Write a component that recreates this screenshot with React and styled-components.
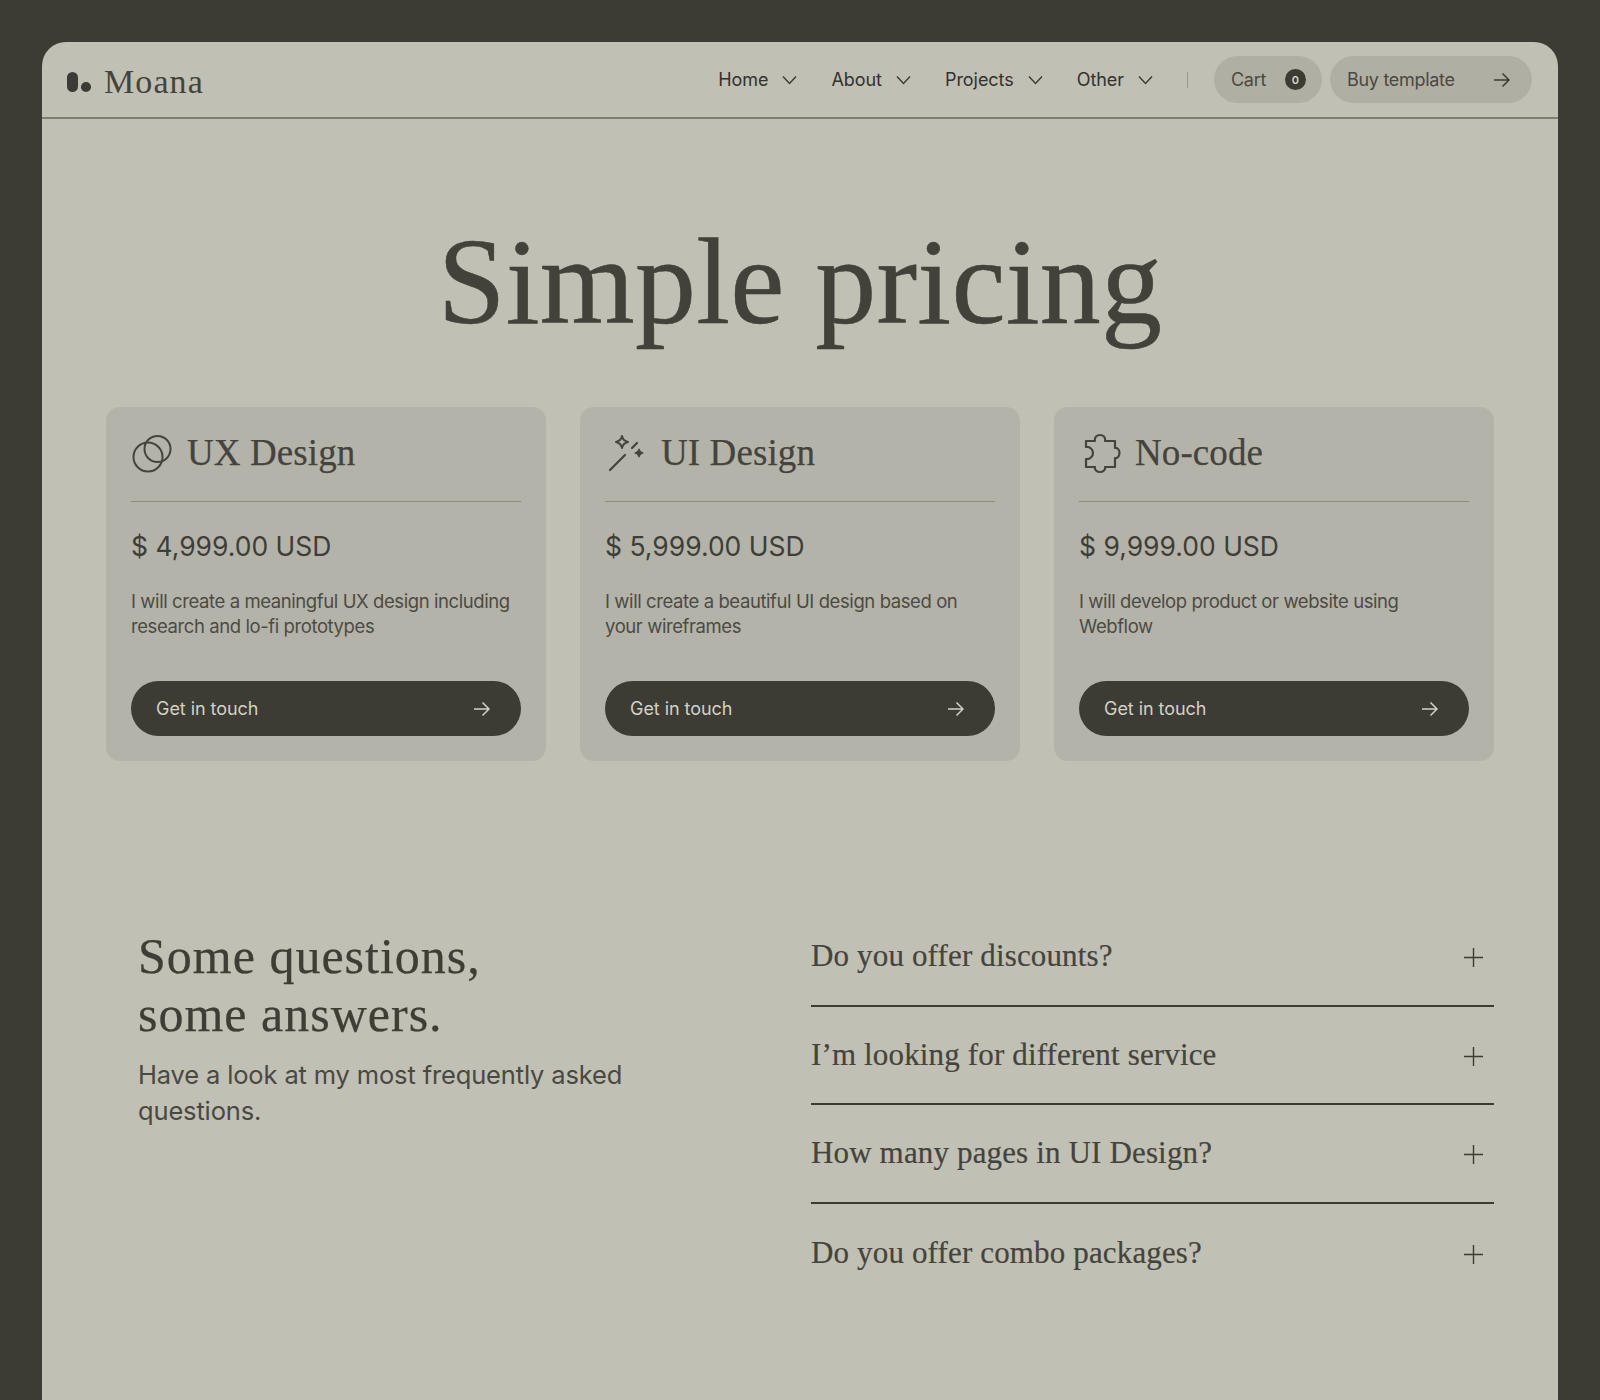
import React from "react";
import styled, { createGlobalStyle } from "styled-components";

const GlobalStyle = createGlobalStyle`
  html, body { margin: 0; padding: 0; background: #3c3b34; }
  body { font-family: "Inter", "Liberation Sans", sans-serif; color: #3c3b34; }
`;

const serif = `"Liberation Serif", "Times New Roman", serif`;

const Panel = styled.div`
  margin: 42px 42px 0;
  height: 1358px;
  box-sizing: border-box;
  background: #c0c0b4;
  border-radius: 24px 24px 0 0;
  overflow: hidden;
`;

const Header = styled.header`
  height: 77px;
  box-sizing: border-box;
  border-bottom: 2px solid #7f7e70;
  padding: 14px 26px 0 25px;
  display: flex;
  align-items: flex-start;
  justify-content: space-between;
`;

const Logo = styled.div`
  display: flex;
  align-items: center;
  gap: 13px;
  height: 52px;
  font-family: ${serif};
  font-size: 34px;
  letter-spacing: 1.1px;
  color: #45443c;
`;

const LogoMark = styled.span`
  display: flex;
  align-items: flex-end;
  gap: 3px;
  height: 20px;
`;

const LogoPill = styled.i`
  width: 10.5px;
  height: 20px;
  border-radius: 6px;
  background: #3c3b34;
`;

const LogoDot = styled.i`
  width: 10.5px;
  height: 10px;
  border-radius: 50%;
  background: #3c3b34;
`;

const Nav = styled.nav`
  display: flex;
  align-items: center;
  height: 47px;
`;

const NavItem = styled.a`
  display: flex;
  align-items: center;
  gap: 14px;
  margin-right: 34px;
  font-size: 18px;
  letter-spacing: -0.05px;
  color: #33322c;
`;

const NavDivider = styled.span`
  width: 1px;
  height: 16px;
  background: #98978a;
  margin-right: 26px;
`;

const Pill = styled.a`
  height: 47px;
  box-sizing: border-box;
  display: flex;
  align-items: center;
  justify-content: space-between;
  width: ${(p) => p.$width}px;
  margin-left: ${(p) => p.$gap || 0}px;
  padding: 0 ${(p) => p.$right}px 0 17px;
  border-radius: 24px;
  background: #b0afa4;
  font-size: 18px;
  letter-spacing: -0.3px;
  color: #4a4941;
`;

const Badge = styled.span`
  width: 21px;
  height: 21px;
  border-radius: 50%;
  background: #3c3b34;
  color: #d5d5c8;
  font-size: 11px;
  font-weight: 600;
  display: flex;
  align-items: center;
  justify-content: center;
  letter-spacing: 0;
`;

const Main = styled.main`
  padding: 0 64px;
`;

const Title = styled.h1`
  margin: 98px 0 0;
  height: 190px;
  text-align: center;
  font-family: ${serif};
  font-weight: 400;
  font-size: 122px;
  line-height: 130px;
  letter-spacing: 0.2px;
  color: #42413a;
  -webkit-text-stroke: 0.5px #42413a;
`;

const Cards = styled.section`
  display: grid;
  grid-template-columns: repeat(3, 440px);
  justify-content: space-between;
`;

const Card = styled.article`
  height: 354px;
  box-sizing: border-box;
  padding: 25px;
  border-radius: 14px;
  background: #b4b3a9;
  display: flex;
  flex-direction: column;
`;

const CardHead = styled.div`
  display: flex;
  align-items: center;
  gap: 18px;
  height: 70px;
  border-bottom: 1px solid #8e8d80;
  box-sizing: border-box;
  padding-bottom: 28px;
`;

const CardTitle = styled.h2`
  margin: 0;
  font-family: ${serif};
  font-weight: 400;
  font-size: 37px;
  letter-spacing: 0.1px;
  color: #45443c;
  -webkit-text-stroke: 0.25px #45443c;
`;

const Price = styled.div`
  margin-top: 27px;
  font-size: 26.5px;
  line-height: 34px;
  letter-spacing: 0;
  color: #3f3e36;
`;

const Description = styled.p`
  margin: 26px 0 0;
  font-size: 18.5px;
  line-height: 25px;
  letter-spacing: -0.41px;
  color: #4c4b43;
`;

const CardButton = styled.a`
  margin-top: auto;
  height: 55px;
  flex: none;
  display: flex;
  align-items: center;
  justify-content: space-between;
  padding: 0 31px 0 25px;
  border-radius: 28px;
  background: #3c3b34;
  color: #d2d2c5;
  font-size: 18px;
  letter-spacing: -0.05px;
`;

const Faq = styled.section`
  margin-top: 166px;
  display: grid;
  grid-template-columns: 705px 683px;
`;

const FaqIntro = styled.div`
  padding-left: 32px;
`;

const FaqHeading = styled.h2`
  margin: 0;
  font-family: ${serif};
  font-weight: 400;
  font-size: 50px;
  line-height: 58px;
  letter-spacing: 1px;
  color: #3f3e36;
  -webkit-text-stroke: 0.25px #3f3e36;
`;

const FaqText = styled.p`
  margin: 14px 0 0;
  width: 520px;
  font-size: 25.5px;
  line-height: 36px;
  letter-spacing: -0.15px;
  color: #4a4941;
`;

const FaqList = styled.div`
  display: flex;
  flex-direction: column;
  margin-top: -19px;
`;

const FaqRow = styled.div`
  height: 98.5px;
  box-sizing: border-box;
  display: flex;
  align-items: center;
  justify-content: space-between;
  padding: 0 10px 0 0;
  border-bottom: ${(p) => (p.$last ? "none" : "2px solid #3c3b34")};
  font-family: ${serif};
  font-size: 31px;
  letter-spacing: 0.15px;
  color: #45443c;
  -webkit-text-stroke: 0.2px #45443c;
`;

const PlusWrap = styled.span`
  display: flex;
  padding-top: 3px;
`;

const Chevron = () => (
  <svg width="15" height="10" viewBox="0 0 15 10" fill="none" stroke="#3c3b34" strokeWidth="1.4">
    <path d="M1 1.5 7.500 8.500 14 1.500" />
  </svg>
);

const Arrow = ({ color = "#3c3b34" }) => (
  <svg width="17" height="16" viewBox="0 0 17 16" fill="none" stroke={color} strokeWidth="1.5">
    <path d="M1 8H16M9.500 1.500 16 8 9.500 14.500" />
  </svg>
);

const Plus = () => (
  <svg width="21" height="21" viewBox="0 0 21 21" fill="none" stroke="#3c3b34" strokeWidth="1.4">
    <path d="M10.500 1V20M1 10.500H20" />
  </svg>
);

const Icon = ({ children }) => (
  <svg width="38" height="38" viewBox="0 0 38 38" fill="none" stroke="#45443c" strokeWidth="2" style={{ flex: "none", overflow: "visible" }}>
    {children}
  </svg>
);

const CirclesIcon = () => (
  <Icon>
    <circle cx="17" cy="23" r="14.500" />
    <circle cx="26.500" cy="15" r="13" />
  </Icon>
);

const WandIcon = () => (
  <Icon>
    <path d="M5 36 20 21M27 14 32 9" strokeLinecap="round" strokeWidth="2.200" />
    <path d="M17 2C17.800 5.500 19.500 7.200 23 8C19.500 8.800 17.800 10.500 17 14C16.200 10.500 14.500 8.800 11 8C14.500 7.200 16.200 5.500 17 2Z" strokeWidth="2" strokeLinejoin="round" />
    <path d="M34 15C34.500 17.500 35.500 18.500 38 19C35.500 19.500 34.500 20.500 34 23C33.500 20.500 32.500 19.500 30 19C32.500 18.500 33.500 17.500 34 15Z" fill="#45443c" strokeWidth="1.200" strokeLinejoin="round" />
  </Icon>
);

const PuzzleIcon = () => (
  <Icon>
    <path d="M7 7H16C15 3 18 1 21 1C24 1 27 3 26 7H36V14C39 13.500 40.500 16.500 40.500 19C40.500 21.500 39 24.500 36 24V33H26C27 35.500 24 38 21 38C18 38 15 35.500 16 33H7V25C11 25.500 14 22.500 14 19C14 15.500 11 12.500 7 13Z" strokeLinejoin="round" strokeWidth="2.200" />
  </Icon>
);

const navItems = ["Home", "About", "Projects", "Other"];

const plans = [
  { title: "UX Design", icon: <CirclesIcon />, price: "$ 4,999.00 USD", text: "I will create a meaningful UX design including research and lo-fi prototypes" },
  { title: "UI Design", icon: <WandIcon />, price: "$ 5,999.00 USD", text: "I will create a beautiful UI design based on your wireframes" },
  { title: "No-code", icon: <PuzzleIcon />, price: "$ 9,999.00 USD", text: "I will develop product or website using Webflow" },
];

const questions = [
  "Do you offer discounts?",
  "I’m looking for different service",
  "How many pages in UI Design?",
  "Do you offer combo packages?",
];

export default function App() {
  return (
    <>
      <GlobalStyle />
      <Panel>
        <Header>
          <Logo>
            <LogoMark>
              <LogoPill />
              <LogoDot />
            </LogoMark>
            Moana
          </Logo>
          <Nav>
            {navItems.map((item) => (
              <NavItem key={item}>
                {item}
                <Chevron />
              </NavItem>
            ))}
            <NavDivider />
            <Pill $width={108} $right={16}>
              Cart
              <Badge>0</Badge>
            </Pill>
            <Pill $width={202} $right={22} $gap={8}>
              Buy template
              <Arrow />
            </Pill>
          </Nav>
        </Header>
        <Main>
          <Title>Simple pricing</Title>
          <Cards>
            {plans.map((plan) => (
              <Card key={plan.title}>
                <CardHead>
                  {plan.icon}
                  <CardTitle>{plan.title}</CardTitle>
                </CardHead>
                <Price>{plan.price}</Price>
                <Description>{plan.text}</Description>
                <CardButton>
                  Get in touch
                  <Arrow color="#d2d2c5" />
                </CardButton>
              </Card>
            ))}
          </Cards>
          <Faq>
            <FaqIntro>
              <FaqHeading>
                Some questions,
                <br />
                some answers.
              </FaqHeading>
              <FaqText>Have a look at my most frequently asked questions.</FaqText>
            </FaqIntro>
            <FaqList>
              {questions.map((q, i) => (
                <FaqRow key={q} $last={i === questions.length - 1}>
                  {q}
                  <PlusWrap>
                    <Plus />
                  </PlusWrap>
                </FaqRow>
              ))}
            </FaqList>
          </Faq>
        </Main>
      </Panel>
    </>
  );
}
